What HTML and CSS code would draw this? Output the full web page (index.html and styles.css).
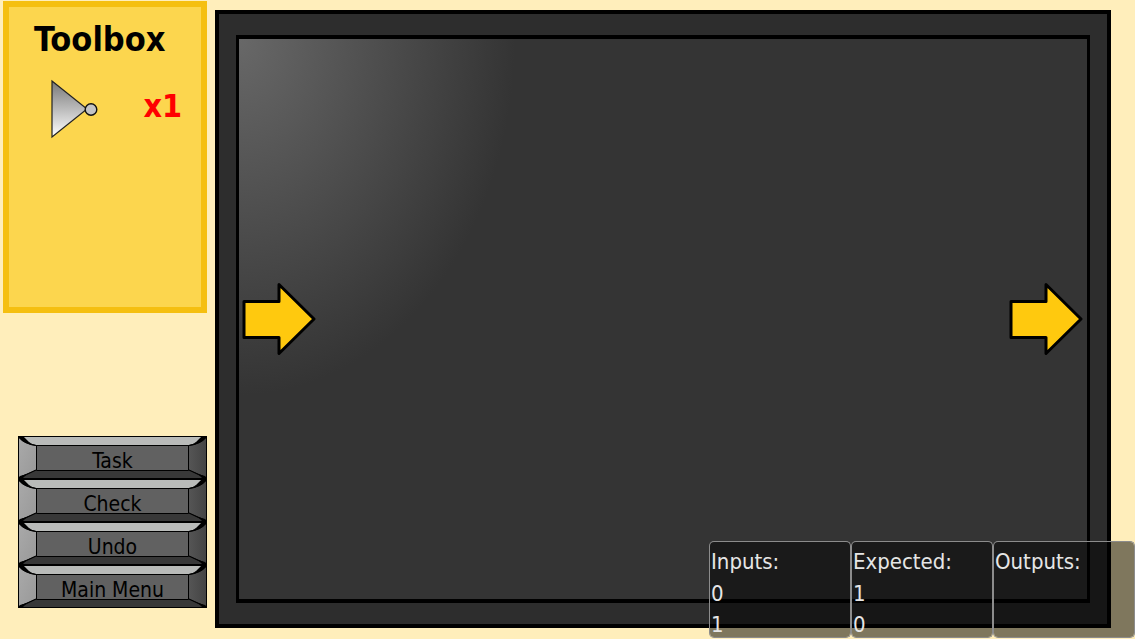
FILE: index.html
```html
<!DOCTYPE html>
<html lang="en">
<head>
<meta charset="utf-8">
<meta name="viewport" content="width=device-width, initial-scale=1">
<title>Logic Gates</title>
<link rel="stylesheet" href="styles.css">
</head>
<body>
<svg class="defs" aria-hidden="true">
  <defs>
    <linearGradient id="left-face" x1="0" y1="0" x2="1" y2="1"><stop offset="0" stop-color="#a9a9a9"/><stop offset="1" stop-color="#999"/></linearGradient>
    <linearGradient id="right-face" x1="0" y1="0" x2="1" y2="0"><stop offset="0" stop-color="#555"/><stop offset="1" stop-color="#444"/></linearGradient>
    <symbol id="bevel" viewBox="0 0 189 43" preserveAspectRatio="none">
      <path d="M0 0H189V43H0Z" fill="#000"/>
      <path d="M1 2Q6 8 18 10V34L1 41Z" fill="url(#left-face)"/>
      <path d="M188 2Q183 8 171 10V34L188 41Z" fill="url(#right-face)"/>
      <path d="M5 1H184Q181 7 171 9H18Q8 7 5 1Z" fill="#b9bbb9"/>
      <path d="M18 34H171L183 40Q184 41 185 42H4Q5 41 6 40Z" fill="#383838"/>
      <path d="M1 1Q7 8 18 9.500M188 1Q182 8 171 9.500M1 42L18 34M188 42L171 34" fill="none" stroke="#000" stroke-width="1.200"/>
      <path d="M0 0H5L11 6L14 8Q4 5 0 0ZM189 0H184L178 6L175 8Q185 5 189 0ZM0 43L2 40L9 38L5 42ZM189 43L187 40L180 38L184 42Z" fill="#000"/>
      <path d="M18.500 9.500H170.500V34.500H18.500Z" fill="#616161" stroke="#000"/>
    </symbol>
    <symbol id="arrow" viewBox="0 0 74 74">
      <path d="M2 19.500H37V2.500L72 37L37 71.500V55.500H2Z" fill="#ffc90e" stroke="#000" stroke-width="3" stroke-linejoin="round"/>
    </symbol>
  </defs>
</svg>
<div class="game">
  <aside class="sidebar">
    <section class="toolbox" aria-labelledby="toolbox-title">
      <h1 class="toolbox-title" id="toolbox-title">Toolbox</h1>
      <div class="tool">
        <svg class="gate" viewBox="0 0 48 60" role="img" aria-label="NOT gate">
          <defs><linearGradient id="gate-fill" x1="0" y1="0" x2="0" y2="1"><stop offset="0" stop-color="#777"/><stop offset="1" stop-color="#fff"/></linearGradient></defs>
          <path d="M2 2L37 30L2 58Z" fill="url(#gate-fill)" stroke="#222" stroke-width="1.200"/>
          <circle cx="41" cy="30.500" r="5.800" fill="#c4c4c4" stroke="#111" stroke-width="1.400"/>
        </svg>
        <span class="tool-count">x1</span>
      </div>
    </section>
    <nav class="menu" aria-label="Game menu">
      <button class="menu-button" type="button"><svg class="bevel" aria-hidden="true"><use href="#bevel"/></svg><span class="label">Task</span></button>
      <button class="menu-button" type="button"><svg class="bevel" aria-hidden="true"><use href="#bevel"/></svg><span class="label">Check</span></button>
      <button class="menu-button" type="button"><svg class="bevel" aria-hidden="true"><use href="#bevel"/></svg><span class="label">Undo</span></button>
      <button class="menu-button" type="button"><svg class="bevel" aria-hidden="true"><use href="#bevel"/></svg><span class="label">Main Menu</span></button>
    </nav>
  </aside>
  <main class="frame">
    <div class="board">
      <svg class="arrow" role="img" aria-label="Input"><use href="#arrow"/></svg>
      <svg class="arrow" role="img" aria-label="Output"><use href="#arrow"/></svg>
    </div>
  </main>
  <table class="results">
    <thead><tr><th scope="col">Inputs:</th><th scope="col">Expected:</th><th scope="col">Outputs:</th></tr></thead>
    <tbody>
      <tr><td>0</td><td>1</td><td></td></tr>
      <tr><td>1</td><td>0</td><td></td></tr>
    </tbody>
  </table>
</div>
</body>
</html>
```
FILE: styles.css
```css
* { box-sizing: border-box; }

body {
  margin: 0;
  background: #ffeebb;
  font-family: "DejaVu Sans Condensed", "DejaVu Sans", sans-serif;
  font-size: 21px;
}

.defs { position: absolute; width: 0; height: 0; }

.game {
  position: relative;
  display: grid;
  grid-template-columns: 204px 1fr;
  gap: 8px;
  min-height: 100vh;
  padding: 1px 24px 11px 3px;
}

.sidebar {
  display: flex;
  flex-direction: column;
  justify-content: space-between;
  padding-bottom: 20px;
}

.toolbox {
  min-height: 312px;
  border: 6px solid #f5bf10;
  background: #fcd64e;
}

.toolbox-title {
  margin: 0;
  padding: 12px 0 0 25px;
  font-size: 34px;
  font-weight: 700;
  line-height: 40px;
}

.tool {
  display: flex;
  align-items: center;
  justify-content: space-between;
  padding: 20px 19px 0 41px;
}

.gate { width: 48px; height: 60px; }

.tool-count {
  color: #f00;
  font-size: 32px;
  font-weight: 700;
  line-height: 32px;
  padding-bottom: 6px;
}

.menu {
  display: flex;
  flex-direction: column;
  padding-left: 15px;
}

.menu-button {
  display: grid;
  height: 43px;
  padding: 0;
  border: 0;
  background: none;
  color: #000;
  font: inherit;
  cursor: pointer;
}

.bevel, .label { grid-area: 1 / 1; }

.bevel { width: 100%; height: 43px; }

.label {
  z-index: 1;
  align-self: center;
  line-height: 24px;
  padding-top: 6px;
}

.frame {
  display: flex;
  margin-top: 9px;
  padding: 21px 17px;
  border: 4px solid #000;
  background: #2d2d2d;
}

.board {
  flex: 1;
  display: flex;
  align-items: center;
  justify-content: space-between;
  padding: 0 4px 0 3px;
  border: 4px solid #000;
  border-width: 4px 3px;
  background: radial-gradient(ellipse 276px 356px at 0 0, #686868, #343434) #343434;
}

.arrow { width: 74px; height: 74px; }

.results {
  position: absolute;
  right: 0;
  bottom: 1px;
  width: 426px;
  table-layout: fixed;
  border-spacing: 0;
  color: #e6e6e6;
  font-size: 22px;
}

.results th, .results td {
  height: 32px;
  padding: 0 1px;
  border: 0 solid #8c8c8c;
  border-width: 0 1px;
  background: rgba(0, 0, 0, 0.5);
  background-clip: padding-box;
  font-weight: 400;
  line-height: 24px;
  text-align: left;
  vertical-align: bottom;
}

.results th {
  height: 33px;
  border-top-width: 1px;
  border-radius: 5px 5px 0 0;
}

.results tr:last-child td {
  border-bottom-width: 1px;
  border-radius: 0 0 5px 5px;
}
```
